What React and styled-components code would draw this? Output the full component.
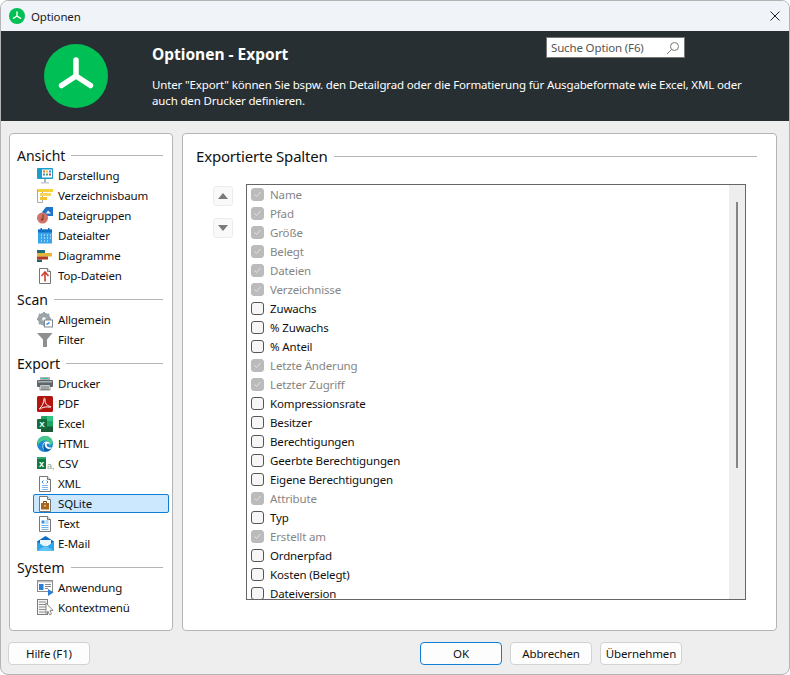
import styled, { createGlobalStyle } from 'styled-components';

const GlobalStyle = createGlobalStyle`
  html, body {
    margin: 0;
    padding: 0;
    background: #ffffff;
  }
  * {
    box-sizing: border-box;
  }
`;

const ExcelMark = styled.text`
  font-family: "Liberation Sans", sans-serif;
  font-size: 8px;
  font-weight: 700;
  letter-spacing: 0;
  fill: #fff;
  text-anchor: middle;
`;

const CsvMark = styled.text`
  font-family: "Liberation Sans", sans-serif;
  font-size: 9px;
  font-weight: 700;
  letter-spacing: 0;
  fill: #fff;
  text-anchor: middle;
`;

const CsvSuffix = styled.text`
  font-family: "Liberation Sans", sans-serif;
  font-size: 9px;
  letter-spacing: 0;
  fill: #7fa88f;
`;

const Doc = ({ children }) => (
  <svg width="16" height="16" viewBox="0 0 16 16">
    <path d="M2.5.5h8l3 3v12h-11z" fill="#fff" stroke="#777" />
    <path d="M10.5.5v3h3" fill="#e8e8e8" stroke="#777" />
    {children}
  </svg>
);

const icons = {
  display: (
    <svg width="18" height="16" viewBox="0 0 18 16">
      <rect x="0" y="0" width="16" height="11" rx="1" fill="#1b9cc9" />
      <rect x="5" y="1.5" width="10" height="8" fill="#fff" />
      <rect x="6" y="2.5" width="2" height="2" fill="#e8732c" />
      <rect x="9" y="2.5" width="2" height="2" fill="#f2c230" />
      <rect x="12" y="2.5" width="2" height="2" fill="#3f8fd8" />
      <rect x="6" y="5.5" width="2" height="2" fill="#3f8fd8" />
      <rect x="9" y="5.5" width="2" height="2" fill="#52a85a" />
      <rect x="12" y="5.5" width="2" height="2" fill="#c0465c" />
      <rect x="7" y="11" width="2" height="3" fill="#a9b4ba" />
      <rect x="4" y="14" width="8" height="1.5" fill="#c4ccd0" />
    </svg>
  ),
  tree: (
    <svg width="16" height="16" viewBox="0 0 16 16">
      <path d="M.5 1.5h5v13h-5z" fill="#fff" stroke="#a8a8a8" />
      <rect x="1" y="1" width="15" height="3" fill="#f7cf3d" />
      <rect x="3" y="5" width="11" height="3" fill="#f7d65c" />
      <rect x="3" y="9" width="7" height="3" fill="#f4c430" />
    </svg>
  ),
  groups: (
    <svg width="17" height="17" viewBox="0 0 17 17">
      <path d="M5 5l4-5h7v9H8z" fill="#1f74c9" />
      <path d="M11 3.5l3 3h-5z" fill="#fff" />
      <circle cx="5.5" cy="11" r="5.5" fill="#cf7467" />
      <path d="M6 7.5v5" stroke="#8a3f38" strokeWidth="1.2" />
      <circle cx="5" cy="12.5" r="1.2" fill="#8a3f38" />
    </svg>
  ),
  calendar: (
    <svg width="16" height="16" viewBox="0 0 16 16">
      <rect x="1" y="1.5" width="14" height="14" fill="#3aa4ea" />
      <rect x="1" y="1.5" width="14" height="3" fill="#1470c4" />
      <rect x="3.5" y="0" width="1.5" height="3" fill="#1470c4" />
      <rect x="11" y="0" width="1.5" height="3" fill="#1470c4" />
      <path d="M4 7h1M7 7h1M10 7h1M13 7h1M4 10h1M7 10h1M10 10h1M13 10h1M4 13h1M7 13h1M10 13h1" stroke="#fff" strokeWidth="1" />
    </svg>
  ),
  chart: (
    <svg width="15" height="12" viewBox="0 0 15 12">
      <rect x="0" y="0" width="8" height="4" fill="#1f6f78" />
      <rect x="0" y="3" width="15" height="3.5" fill="#e3b53a" />
      <rect x="0" y="6.5" width="11" height="3" fill="#b03a22" />
      <rect x="0" y="9.5" width="5" height="2.5" fill="#2e5e60" />
    </svg>
  ),
  top: (
    <Doc>
      <path d="M8 4.5v9" stroke="#d63b2a" strokeWidth="1.6" />
      <path d="M4.5 8L8 4l3.5 4" fill="none" stroke="#d63b2a" strokeWidth="1.6" />
    </Doc>
  ),
  gear: (
    <svg width="16" height="16" viewBox="0 0 16 16">
      <circle cx="7" cy="7" r="4.8" fill="none" stroke="#9aa3a8" strokeWidth="3" />
      <path d="M7 0v14M0 7h14M2 2l10 10M12 2L2 12" stroke="#9aa3a8" strokeWidth="2" />
      <circle cx="7" cy="7" r="1.8" fill="#fff" />
      <rect x="7.5" y="8" width="8" height="7" fill="#fff" stroke="#7f8a90" />
      <path d="M9.5 12.5l3-2" stroke="#2b7fd4" strokeWidth="1.5" />
    </svg>
  ),
  filter: (
    <svg width="16" height="14" viewBox="0 0 16 14">
      <path d="M0 0h15.5L10 6.5V14H6V6.5z" fill="#8f8f8f" />
    </svg>
  ),
  printer: (
    <svg width="16" height="14" viewBox="0 0 16 14">
      <rect x="3" y="0" width="10" height="3" fill="#a9b4b6" />
      <rect x="5" y="1" width="6" height="1" fill="#38c0a0" />
      <rect x="0" y="3" width="16" height="7" rx="1" fill="#5f676b" />
      <rect x="1" y="4" width="14" height="1.5" fill="#aab1b4" />
      <rect x="3" y="8" width="10" height="5" fill="#fff" stroke="#5f676b" strokeWidth=".7" />
      <path d="M4 10h8M4 12h8" stroke="#333" strokeWidth=".9" />
    </svg>
  ),
  pdf: (
    <svg width="16" height="16" viewBox="0 0 16 16">
      <rect width="16" height="16" rx="1.5" fill="#b3140e" />
      <path d="M2.5 12.5C5 11 7 6 7 3c0-1.5 1.2-1 1 1-.3 3 2 6 5.5 6.5 1 .2.5 1-1 .7-3-.6-6-.2-8 1-1 1-2.500 1.300-2 .3z" fill="none" stroke="#fff" strokeWidth="1" />
    </svg>
  ),
  excel: (
    <svg width="16" height="16" viewBox="0 0 16 16">
      <rect x="4" y="0" width="12" height="16" rx="1" fill="#21a366" />
      <rect x="10" y="0" width="6" height="5" fill="#33c481" />
      <rect x="4" y="5" width="6" height="6" fill="#107c41" />
      <rect x="10" y="10.5" width="6" height="5.5" fill="#185c37" />
      <rect x="4" y="11" width="6" height="5" fill="#185c37" />
      <rect x="0" y="3" width="10" height="10" rx="1" fill="#0f6e3c" />
      <ExcelMark x="5" y="11">X</ExcelMark>
    </svg>
  ),
  edge: (
    <svg width="16" height="16" viewBox="0 0 16 16">
      <circle cx="8" cy="8" r="8" fill="#1a86d8" />
      <path d="M1 5C3-1 13-2 15.5 5c1 3-1.5 5-4 4.5C13 7 11 4.5 8 4.5 5 4.5 2.5 6 1 9z" fill="#48c98b" />
      <path d="M5.5 10c0-3 2-4.5 4-4.5s3 1 3.500 2.500c-3-1.500-4 .5-3 2 1 1.500 3.500 2 5 1-1.500 2.500-4.500 4-7 3C6 13.500 5.500 12 5.500 10z" fill="#fff" />
      <path d="M6.2 10c0-1.500.8-2.700 2-3.200-.8 1.500-.6 3.500.8 5 1 1 3 2 5 1.500-1.500 1.800-4 2.400-6 1.700C6.600 14 6.200 12 6.200 10z" fill="#0c5fa8" />
    </svg>
  ),
  csv: (
    <svg width="18" height="14" viewBox="0 0 18 14">
      <rect x="0" y="0" width="9" height="12" fill="#107c41" />
      <rect x="0" y="0" width="9" height="2" fill="#33a66c" />
      <CsvMark x="4.5" y="9.5">x</CsvMark>
      <CsvSuffix x="10" y="12">a,</CsvSuffix>
    </svg>
  ),
  xml: (
    <Doc>
      <path d="M6.5 4.5L5 6l1.5 1.5M9.5 4.5L11 6 9.5 7.5" fill="none" stroke="#3a8fdc" />
      <path d="M5 9.5h6M5 11.5h6M5 13.5h6" stroke="#7fb8ea" />
    </Doc>
  ),
  sqlite: (
    <Doc>
      <rect x="4" y="7" width="8" height="6.5" fill="#a8651d" />
      <path d="M6.5 7V5.5h3V7" fill="none" stroke="#6e3f10" />
      <rect x="7.2" y="9" width="1.6" height="1.5" fill="#f3d9a6" />
    </Doc>
  ),
  text: (
    <Doc>
      <rect x="4.5" y="4.5" width="3" height="3" fill="#3a8fdc" />
      <path d="M8.5 5h3M8.5 7h3M4.5 9.5h7M4.5 11.5h7M4.5 13.5h7" stroke="#6fb1e8" />
    </Doc>
  ),
  mail: (
    <svg width="17" height="15" viewBox="0 0 17 15">
      <path d="M0 5.5L8.5 0 17 5.5V15H0z" fill="#0a6cc4" />
      <path d="M3 4h11v6H3z" fill="#eaf5fc" />
      <path d="M0 5.5l8.5 6 8.500-6V15H0z" fill="#2ea6ec" />
      <path d="M0 15l8.5-5.500L17 15z" fill="#62c3f5" />
    </svg>
  ),
  app: (
    <svg width="17" height="16" viewBox="0 0 17 16">
      <rect x=".5" y=".5" width="15" height="11" fill="#fff" stroke="#8b8b8b" />
      <rect x="1" y="1" width="14" height="1.5" fill="#bfbfbf" />
      <rect x="2" y="4" width="4.5" height="6" fill="#2c7fd6" />
      <path d="M8 4.5h6M8 6.5h6M8 8.5h3" stroke="#8b8b8b" />
      <path d="M11 9l5.5 3.500L11 16z" fill="#2c7fd6" />
    </svg>
  ),
  context: (
    <svg width="17" height="17" viewBox="0 0 17 17">
      <rect x=".5" y=".5" width="10" height="15" fill="#f4f4f4" stroke="#7d7d7d" />
      <path d="M2 3h7M2 5.5h7M2 8h7M2 10.5h7M2 13h7" stroke="#8f8f8f" />
      <path d="M9 4l7 7.500h-3l1.500 3.500-2 .8-1.500-3.500L9 14.500z" fill="#fff" stroke="#8a8a8a" />
    </svg>
  ),
};

const sections = [
  {
    title: 'Ansicht',
    items: [
      ['Darstellung', 'display'],
      ['Verzeichnisbaum', 'tree'],
      ['Dateigruppen', 'groups'],
      ['Dateialter', 'calendar'],
      ['Diagramme', 'chart'],
      ['Top-Dateien', 'top'],
    ],
  },
  {
    title: 'Scan',
    items: [
      ['Allgemein', 'gear'],
      ['Filter', 'filter'],
    ],
  },
  {
    title: 'Export',
    items: [
      ['Drucker', 'printer'],
      ['PDF', 'pdf'],
      ['Excel', 'excel'],
      ['HTML', 'edge'],
      ['CSV', 'csv'],
      ['XML', 'xml'],
      ['SQLite', 'sqlite'],
      ['Text', 'text'],
      ['E-Mail', 'mail'],
    ],
  },
  {
    title: 'System',
    items: [
      ['Anwendung', 'app'],
      ['Kontextmenü', 'context'],
    ],
  },
];

const columns = [
  ['Name', true],
  ['Pfad', true],
  ['Größe', true],
  ['Belegt', true],
  ['Dateien', true],
  ['Verzeichnisse', true],
  ['Zuwachs', false],
  ['% Zuwachs', false],
  ['% Anteil', false],
  ['Letzte Änderung', true],
  ['Letzter Zugriff', true],
  ['Kompressionsrate', false],
  ['Besitzer', false],
  ['Berechtigungen', false],
  ['Geerbte Berechtigungen', false],
  ['Eigene Berechtigungen', false],
  ['Attribute', true],
  ['Typ', false],
  ['Erstellt am', true],
  ['Ordnerpfad', false],
  ['Kosten (Belegt)', false],
  ['Dateiversion', false],
];

const Logo = ({ size }) => (
  <LogoMark width={size} height={size} viewBox="0 0 64 64">
    <circle cx="32" cy="32" r="32" fill="#00bf55" />
    <path d="M32 16v16M32 32L17.5 41.5M32 32l14.5 9.5" fill="none" stroke="#fff" strokeWidth="5.5" strokeLinecap="round" />
  </LogoMark>
);

export default function App() {
  return (
    <Window>
      <GlobalStyle />
      <TitleBar>
        <Logo size={16} />
        <TitleText>Optionen</TitleText>
        <CloseButton>
          <svg width="10" height="10" viewBox="0 0 10 10">
            <path d="M.5.5l9 9M9.5.5l-9 9" stroke="#222" strokeWidth="1" />
          </svg>
        </CloseButton>
      </TitleBar>
      <Banner>
        <Logo size={64} />
        <BannerText>
          <BannerTop>
            <BannerTitle>Optionen - Export</BannerTitle>
            <SearchBox>
              <span>Suche Option (F6)</span>
              <svg width="14" height="14" viewBox="0 0 14 14">
                <circle cx="8.5" cy="5.5" r="4" fill="none" stroke="#777" />
                <path d="M5.5 8.5L1 13" stroke="#777" />
              </svg>
            </SearchBox>
          </BannerTop>
          <BannerDesc>
            Unter "Export" können Sie bspw. den Detailgrad oder die Formatierung für Ausgabeformate wie Excel, XML oder
            <br />
            auch den Drucker definieren.
          </BannerDesc>
        </BannerText>
      </Banner>
      <Content>
        <Sidebar>
          {sections.map((section) => (
            <Section key={section.title}>
              <SectionHead>
                <SectionTitle>{section.title}</SectionTitle>
                <Rule />
              </SectionHead>
              {section.items.map(([label, icon]) => (
                <NavItem key={label} $active={label === 'SQLite'}>
                  <NavIcon>{icons[icon]}</NavIcon>
                  <span>{label}</span>
                </NavItem>
              ))}
            </Section>
          ))}
        </Sidebar>
        <Main>
          <MainHead>
            <MainTitle>Exportierte Spalten</MainTitle>
            <Rule />
          </MainHead>
          <MainBody>
            <MoveButtons>
              <MoveButton>
                <svg width="10" height="6" viewBox="0 0 10 6"><path d="M5 0l5 6H0z" fill="#7b7b7b" /></svg>
              </MoveButton>
              <MoveButton>
                <svg width="10" height="6" viewBox="0 0 10 6"><path d="M5 6L0 0h10z" fill="#7b7b7b" /></svg>
              </MoveButton>
            </MoveButtons>
            <ColumnList>
              <Rows>
                {columns.map(([label, locked]) => (
                  <Row key={label} $locked={locked}>
                    <CheckBox $locked={locked}>
                      {locked && (
                        <svg width="9" height="9" viewBox="0 0 9 9">
                          <path d="M1.5 4.5l2 2 4-4.500" fill="none" stroke="#e2e2e2" strokeWidth="1" />
                        </svg>
                      )}
                    </CheckBox>
                    {label}
                  </Row>
                ))}
              </Rows>
              <ScrollTrack>
                <ScrollThumb />
              </ScrollTrack>
            </ColumnList>
          </MainBody>
        </Main>
      </Content>
      <Footer>
        <Button>Hilfe (F1)</Button>
        <FooterRight>
          <Button $primary>OK</Button>
          <Button>Abbrechen</Button>
          <Button>Übernehmen</Button>
        </FooterRight>
      </Footer>
    </Window>
  );
}

const Window = styled.div`
  width: 790px;
  height: 675px;
  display: flex;
  flex-direction: column;
  background: #eeeeee;
  border: 1px solid #b4b4b4;
  border-radius: 8px;
  overflow: hidden;
  font-family: "Noto Sans", "Open Sans", sans-serif;
  font-size: 11.5px;
  letter-spacing: -0.15px;
  color: #111;
`;

const LogoMark = styled.svg`
  flex: none;
  display: block;
`;

const TitleBar = styled.div`
  height: 30px;
  flex: none;
  display: flex;
  align-items: center;
  padding: 0 8px;
  background: #f0f4f9;
`;

const TitleText = styled.span`
  margin-left: 6px;
  color: #1a1a1a;
`;

const CloseButton = styled.div`
  margin-left: auto;
  margin-right: 1px;
  display: flex;
`;

const Banner = styled.div`
  height: 90px;
  flex: none;
  display: flex;
  align-items: center;
  padding: 0 0 0 43px;
  background: #272f33;
  color: #fff;
`;

const BannerText = styled.div`
  flex: 1;
  min-width: 0;
  align-self: stretch;
  margin-left: 44px;
  padding: 6px 104px 0 0;
`;

const BannerTop = styled.div`
  display: flex;
  justify-content: space-between;
  align-items: flex-start;
  height: 40px;
`;

const BannerTitle = styled.div`
  font-size: 15.5px;
  font-weight: 700;
  letter-spacing: 0;
  line-height: 20px;
  margin-top: 7px;
`;

const SearchBox = styled.div`
  width: 139px;
  height: 21px;
  display: flex;
  align-items: center;
  justify-content: space-between;
  padding: 0 4px;
  background: #fff;
  border: 1px solid #777;
  color: #555;
`;

const BannerDesc = styled.div`
  line-height: 16px;
  white-space: nowrap;
`;

const Content = styled.div`
  flex: 1;
  display: flex;
  gap: 9px;
  padding: 12px 12px 11px 8px;
  min-height: 0;
`;

const Sidebar = styled.div`
  width: 164px;
  flex: none;
  display: flex;
  flex-direction: column;
  gap: 4px;
  padding: 11px 3px 0 7px;
  background: #fff;
  border: 1px solid #b4b4b4;
  border-radius: 4px;
`;

const Section = styled.div`
  display: flex;
  flex-direction: column;
`;

const SectionHead = styled.div`
  height: 20px;
  display: flex;
  align-items: center;
  gap: 6px;
  padding-right: 6px;
`;

const SectionTitle = styled.div`
  font-size: 14px;
  letter-spacing: 0;
  color: #111;
`;

const Rule = styled.div`
  flex: 1;
  height: 1px;
  background: #b4b4b4;
`;

const NavItem = styled.div`
  height: 19px;
  margin: 1px 0 0 16px;
  display: flex;
  align-items: center;
  padding-left: 3px;
  border: 1px solid ${(p) => (p.$active ? '#0f7fd6' : 'transparent')};
  border-radius: 2px;
  background: ${(p) => (p.$active ? '#cce8ff' : 'transparent')};
  color: #111;
`;

const NavIcon = styled.span`
  width: 21px;
  height: 17px;
  flex: none;
  display: flex;
  align-items: center;
`;

const Main = styled.div`
  flex: 1;
  display: flex;
  flex-direction: column;
  padding: 12px 19px 30px 13px;
  background: #fff;
  border: 1px solid #b4b4b4;
  border-radius: 4px;
`;

const MainHead = styled.div`
  height: 20px;
  display: flex;
  align-items: center;
  gap: 6px;
`;

const MainTitle = styled.div`
  font-size: 15px;
  letter-spacing: -0.2px;
  color: #111;
`;

const MainBody = styled.div`
  flex: 1;
  min-height: 0;
  display: flex;
  margin-top: 18px;
  padding-left: 17px;
`;

const MoveButtons = styled.div`
  width: 33px;
  flex: none;
  display: flex;
  flex-direction: column;
  gap: 12px;
  padding-top: 2px;
`;

const MoveButton = styled.div`
  width: 20px;
  height: 20px;
  display: flex;
  align-items: center;
  justify-content: center;
  background: #f9f9f9;
  border: 1px solid #ececec;
  border-radius: 3px;
`;

const ColumnList = styled.div`
  width: 500px;
  display: flex;
  border: 1px solid #666;
  min-height: 0;
  overflow: hidden;
`;

const Rows = styled.div`
  flex: 1;
  padding: 0 0 0 4px;
  overflow: hidden;
`;

const Row = styled.div`
  height: 19px;
  display: flex;
  align-items: center;
  gap: 6px;
  color: ${(p) => (p.$locked ? '#858585' : '#111')};
`;

const CheckBox = styled.span`
  width: 13px;
  height: 13px;
  flex: none;
  display: flex;
  align-items: center;
  justify-content: center;
  border-radius: 3px;
  border: 1px solid ${(p) => (p.$locked ? '#bbbbbb' : '#555')};
  background: ${(p) => (p.$locked ? '#bbbbbb' : '#f6f6f6')};
`;

const ScrollTrack = styled.div`
  width: 16px;
  flex: none;
  background: #eeeeee;
  padding: 17px 0 0 7px;
`;

const ScrollThumb = styled.div`
  width: 2px;
  height: 266px;
  background: #858585;
`;

const Footer = styled.div`
  height: 32px;
  flex: none;
  display: flex;
  justify-content: space-between;
  padding: 0 107px 9px 7px;
`;

const FooterRight = styled.div`
  display: flex;
  gap: 8px;
`;

const Button = styled.div`
  width: 82px;
  height: 23px;
  display: flex;
  align-items: center;
  justify-content: center;
  background: #fdfdfd;
  border: 1px solid ${(p) => (p.$primary ? '#0f7fd6' : '#d2d2d2')};
  border-radius: 4px;
  color: #111;
`;
